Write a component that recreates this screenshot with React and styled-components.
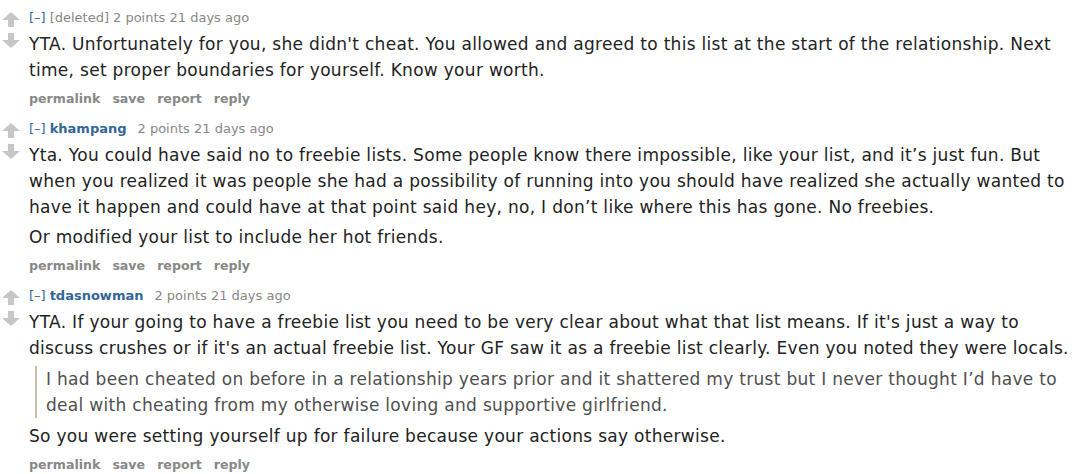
import React from 'react';
import styled, { createGlobalStyle } from 'styled-components';

const GlobalStyle = createGlobalStyle`
  body {
    margin: 0;
    background: #fff;
    font-family: "DejaVu Sans", Verdana, sans-serif;
  }
`;

const comments = [
  {
    author: null,
    body: [
      { text: "YTA. Unfortunately for you, she didn't cheat. You allowed and agreed to this list at the start of the relationship. Next time, set proper boundaries for yourself. Know your worth." },
    ],
  },
  {
    author: 'khampang',
    body: [
      { text: "Yta. You could have said no to freebie lists. Some people know there impossible, like your list, and it\u2019s just fun. But when you realized it was people she had a possibility of running into you should have realized she actually wanted to have it happen and could have at that point said hey, no, I don\u2019t like where this has gone. No freebies." },
      { text: 'Or modified your list to include her hot friends.' },
    ],
  },
  {
    author: 'tdasnowman',
    body: [
      { text: "YTA. If your going to have a freebie list you need to be very clear about what that list means. If it's just a way to discuss crushes or if it's an actual freebie list. Your GF saw it as a freebie list clearly. Even you noted they were locals." },
      { quote: true, text: 'I had been cheated on before in a relationship years prior and it shattered my trust but I never thought I\u2019d have to deal with cheating from my otherwise loving and supportive girlfriend.' },
      { text: 'So you were setting yourself up for failure because your actions say otherwise.' },
    ],
  },
];

const Arrow = ({ down }) => (
  <svg width="18" height="15" viewBox="0 0 18 15">
    <path
      d="M9 0 L18 8 L12 8 L12 15 L6 15 L6 8 L0 8 Z"
      fill="#c6c6c6"
      transform={down ? 'rotate(180 9 7.5)' : undefined}
    />
  </svg>
);

const App = () => (
  <>
    <GlobalStyle />
    <List>
      {comments.map((c, i) => (
        <Comment key={i}>
          <Votes>
            <Arrow />
            <Arrow down />
          </Votes>
          <Entry>
            <Tagline>
              <Toggle>[–]</Toggle>
              {c.author ? <Author>{c.author}</Author> : <Deleted>[deleted]</Deleted>}
              <Score>2 points</Score> 21 days ago
            </Tagline>
            <Body>
              {c.body.map((p, j) =>
                p.quote ? (
                  <Quote key={j}>{p.text}</Quote>
                ) : (
                  <Para key={j}>{p.text}</Para>
                )
              )}
            </Body>
            <Buttons>
              <Button>permalink</Button>
              <Button>save</Button>
              <Button>report</Button>
              <Button>reply</Button>
            </Buttons>
          </Entry>
        </Comment>
      ))}
    </List>
  </>
);

export default App;

const List = styled.div`
  padding: 8px 10px 0 2px;
  display: flex;
  flex-direction: column;
  gap: 10px;
`;

const Comment = styled.div`
  display: flex;
`;

const Votes = styled.div`
  width: 27px;
  flex-shrink: 0;
  display: flex;
  flex-direction: column;
  gap: 6px;
  padding-top: 4px;
`;

const Entry = styled.div`
  flex: 1;
  min-width: 0;
`;

const Tagline = styled.div`
  font-size: 13px;
  line-height: 20px;
  color: #888;
`;

const Toggle = styled.span`
  color: #369;
  margin-right: 4px;
`;

const Deleted = styled.span`
  color: #888;
  margin-right: 4px;
`;

const Author = styled.span`
  color: #369;
  font-weight: bold;
  margin-right: 11px;
`;

const Score = styled.span`
  color: #888;
`;

const Body = styled.div`
  margin-top: 3px;
  color: #222;
  font-size: 17px;
  letter-spacing: 0.3px;
  line-height: 26px;
  display: flex;
  flex-direction: column;
  gap: 4px;
`;

const Para = styled.p`
  margin: 0;
`;

const Quote = styled.blockquote`
  margin: 1px 0 1px 6px;
  padding: 0 0 0 9px;
  border-left: 2px solid #c5c1ad;
  color: #4f4f4f;
`;

const Buttons = styled.div`
  margin-top: 6px;
  display: flex;
  gap: 12px;
  font-size: 12.6px;
  line-height: 20px;
`;

const Button = styled.span`
  color: #888;
  font-weight: bold;
`;
